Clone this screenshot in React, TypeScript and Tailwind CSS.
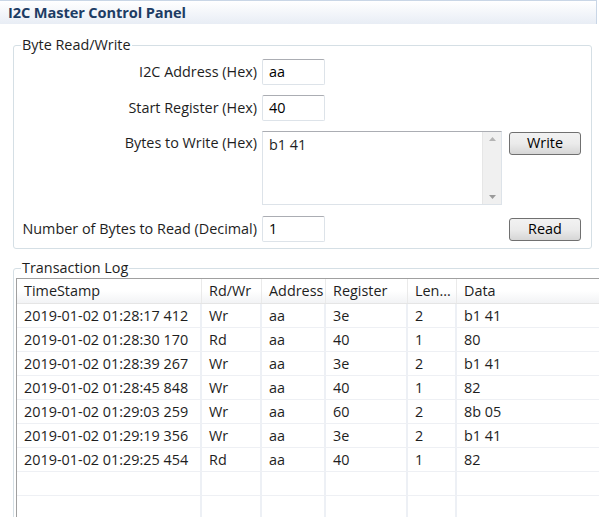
import React from "react";

type LogRow = {
  ts: string;
  rw: string;
  addr: string;
  reg: string;
  len: string;
  data: string;
};

const rows: LogRow[] = [
  { ts: "2019-01-02 01:28:17 412", rw: "Wr", addr: "aa", reg: "3e", len: "2", data: "b1 41" },
  { ts: "2019-01-02 01:28:30 170", rw: "Rd", addr: "aa", reg: "40", len: "1", data: "80" },
  { ts: "2019-01-02 01:28:39 267", rw: "Wr", addr: "aa", reg: "3e", len: "2", data: "b1 41" },
  { ts: "2019-01-02 01:28:45 848", rw: "Wr", addr: "aa", reg: "40", len: "1", data: "82" },
  { ts: "2019-01-02 01:29:03 259", rw: "Wr", addr: "aa", reg: "60", len: "2", data: "8b 05" },
  { ts: "2019-01-02 01:29:19 356", rw: "Wr", addr: "aa", reg: "3e", len: "2", data: "b1 41" },
  { ts: "2019-01-02 01:29:25 454", rw: "Rd", addr: "aa", reg: "40", len: "1", data: "82" },
];

const cols = ["TimeStamp", "Rd/Wr", "Address", "Register", "Len...", "Data"];
const colW = ["w-[185px]", "w-[60px]", "w-[64px]", "w-[82px]", "w-[49px]", "w-[160px]"];

function TextBox({ value }: { value: string }) {
  return (
    <div className="w-[63px] h-[26px] border border-[#dde3e9] border-t-[#abadb3] rounded-[2px] bg-white px-[6px] flex items-center text-[#000]">
      {value}
    </div>
  );
}

function Button({ label }: { label: string }) {
  return (
    <button className="w-[72px] h-[23px] border border-[#707070] rounded-[3px] bg-gradient-to-b from-[#f2f2f2] via-[#ebebeb] to-[#d6d6d6] text-[#000] leading-none">
      {label}
    </button>
  );
}

export default function App() {
  return (
    <div
      className="w-[599px] h-[517px] bg-white overflow-hidden text-[14.4px] text-[#1e1e1e]"
      style={{ fontFamily: '"Open Sans", "Noto Sans", sans-serif' }}
    >
      {/* title bar */}
      <div className="w-[597px] h-[24px] border-t border-r border-[#c9d6e6] bg-gradient-to-b from-[#ffffff] to-[#e8edf5] flex items-center pl-[8px]">
        <span className="font-bold text-[14.6px] text-[#1d3c64] tracking-[-0.1px]">I2C Master Control Panel</span>
      </div>

      {/* Byte Read/Write */}
      <fieldset className="ml-[13px] mt-[12px] w-[579px] h-[213px] border border-[#d5dfe5] rounded-[3px] px-0 pb-0">
        <legend className="ml-[7px] px-[1px] leading-[18px]">Byte Read/Write</legend>
        <div className="flex flex-col pt-[5px]">
          <div className="flex items-center h-[26px]">
            <span className="w-[248px] text-right pr-[5px]">I2C Address (Hex)</span>
            <TextBox value="aa" />
          </div>
          <div className="flex items-center h-[26px] mt-[10px]">
            <span className="w-[248px] text-right pr-[5px]">Start Register (Hex)</span>
            <TextBox value="40" />
          </div>
          <div className="flex items-start h-[74px] mt-[10px]">
            <span className="w-[248px] text-right pr-[5px] pt-[1px]">Bytes to Write (Hex)</span>
            <div className="w-[240px] h-[74px] border border-[#dde3e9] border-t-[#abadb3] bg-white flex">
              <div className="flex-1 px-[6px] pt-[2px]">b1 41</div>
              <div className="w-[19px] bg-[#f0f0f0] border-l border-[#e6e6e6] flex flex-col justify-between items-center py-[5px]">
                <svg width="7" height="4" viewBox="0 0 7 4"><path d="M0 4 L3.5 0 L7 4 Z" fill="#b4b4b4" /></svg>
                <svg width="7" height="4" viewBox="0 0 7 4"><path d="M0 0 L3.5 4 L7 0 Z" fill="#9a9a9a" /></svg>
              </div>
            </div>
            <div className="ml-[7px] mt-[1px]">
              <Button label="Write" />
            </div>
          </div>
          <div className="flex items-center h-[26px] mt-[11px]">
            <span className="w-[248px] text-right pr-[5px] whitespace-nowrap">Number of Bytes to Read (Decimal)</span>
            <TextBox value="1" />
            <div className="ml-[184px]">
              <Button label="Read" />
            </div>
          </div>
        </div>
      </fieldset>

      {/* Transaction Log */}
      <fieldset className="ml-[13px] mt-[10px] w-[620px] h-[300px] border border-[#d5dfe5] rounded-[3px] px-0 pb-0">
        <legend className="ml-[7px] px-[1px] leading-[18px]">Transaction Log</legend>
        <div className="ml-[2px] mt-[1px] border-t border-l border-[#a0a0a0] w-[620px]">
          <div className="flex h-[25px] bg-gradient-to-b from-[#ffffff] via-[#ffffff] to-[#f2f3f5] border-b border-[#e5e5e5]">
            {cols.map((c, i) => (
              <div
                key={c}
                className={`${colW[i]} h-full flex items-center pl-[7px] border-r border-[#eaeaea] whitespace-nowrap overflow-hidden`}
              >
                {c}
              </div>
            ))}
          </div>
          {[...rows, null, null].map((r, ri) => {
            const vals = r ? [r.ts, r.rw, r.addr, r.reg, r.len, r.data] : ["", "", "", "", "", ""];
            return (
              <div key={ri} className="flex h-[24px] border-b border-[#eef0f4]">
                {vals.map((v, i) => (
                  <div
                    key={i}
                    className={`${colW[i]} h-full flex items-center pl-[7px] border-r-2 border-[#edf0f5] whitespace-nowrap`}
                  >
                    {v}
                  </div>
                ))}
              </div>
            );
          })}
        </div>
      </fieldset>
    </div>
  );
}
